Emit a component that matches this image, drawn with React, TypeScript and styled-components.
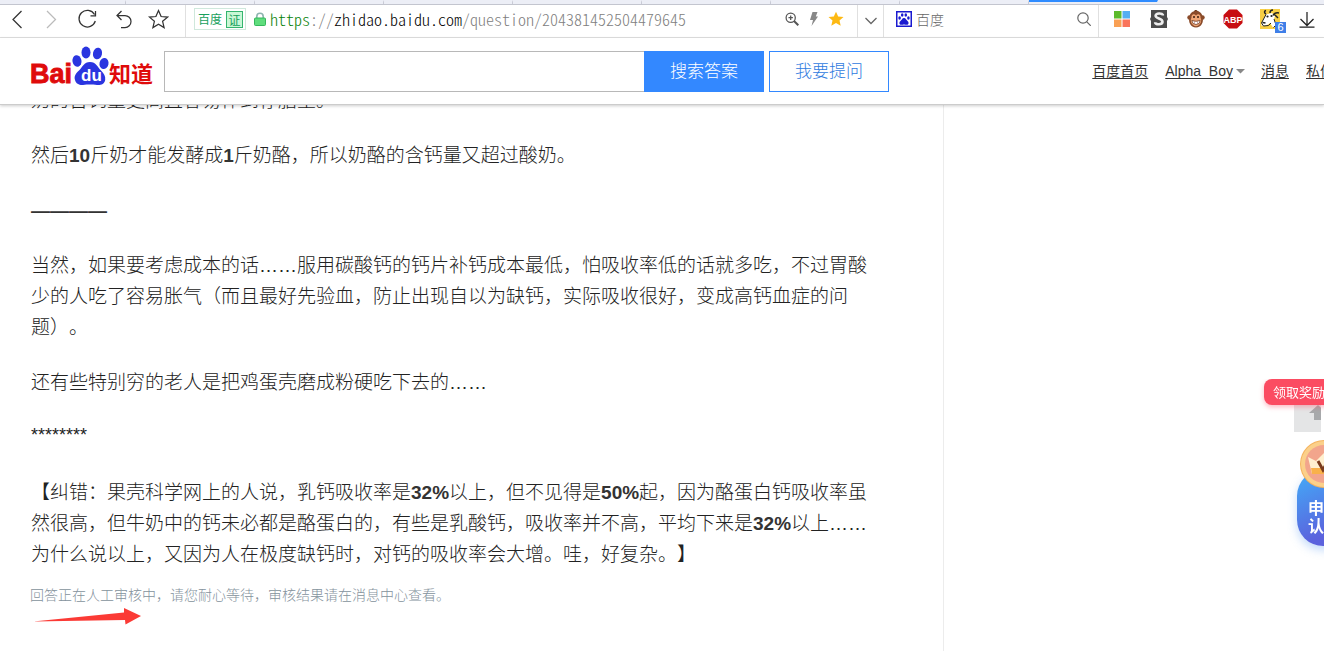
import React from "react";
import styled, { createGlobalStyle } from "styled-components";

const sans = `"Liberation Sans", "Noto Sans CJK SC", sans-serif`;
const cjk = `"Noto Sans CJK SC", sans-serif`;

const GlobalStyle = createGlobalStyle`
  * { box-sizing: border-box; }
  html, body { margin: 0; background: #fff; }
  body { font-family: ${sans}; color: #333; overflow: hidden; }
  button { font-family: inherit; padding: 0; margin: 0; border: 0; background: none; cursor: pointer; }
  svg { display: block; }
`;

const Page = styled.div`
  display: flex;
  flex-direction: column;
  height: 100vh;
  overflow: hidden;
`;

const TabStrip = styled.div`
  display: flex;
  flex: none;
  height: 5px;
  background: #eceef6;
  border-bottom: 1px solid #c3c5cf;
  overflow: hidden;
`;

const Tab = styled.div<{ $active?: boolean }>`
  flex: none;
  width: 129px;
  border-right: 1px solid ${(p) => (p.$active ? "transparent" : "#c9cbd6")};
  border-top: 2px solid ${(p) => (p.$active ? "#2f8cff" : "transparent")};

  &:first-child { margin-left: -3px; }
`;

const Toolbar = styled.div`
  display: flex;
  flex: none;
  height: 33px;
  border-bottom: 1px solid #e0e0e0;
  overflow: hidden;
`;

const ToolGroup = styled.div<{ $pad?: string; $grow?: boolean; $width?: number }>`
  display: flex;
  align-items: center;
  flex: ${(p) => (p.$grow ? "1 1 0" : "none")};
  width: ${(p) => (p.$width ? p.$width + "px" : "auto")};
  min-width: 0;
  padding: ${(p) => p.$pad ?? "0"};
  border-right: 1px solid #e0e0e0;

  &:last-child { border-right: 0; }
`;

const IconButton = styled.button<{ $width: number }>`
  position: relative;
  display: flex;
  flex: none;
  align-items: center;
  justify-content: center;
  width: ${(p) => p.$width}px;
  height: 28px;
`;

const SiteBadge = styled.span`
  display: flex;
  align-items: center;
  gap: 4px;
  flex: none;
  height: 22px;
  padding: 0 2px 0 3px;
  border: 1px solid #cfe8dc;
  font: 12px/16px ${cjk};
  color: #17a05c;
`;

const Verified = styled.span`
  width: 17px;
  line-height: 15px;
  text-align: center;
  border: 1px solid #35b56f;
  background: #c9f7d6;
`;

const LockBox = styled.span`
  flex: none;
  padding: 0 4px 0 8px;
`;

const Url = styled.span`
  flex: 1 1 0;
  min-width: 0;
  overflow: hidden;
  white-space: nowrap;
  font: 16px/24px ${cjk};
  font-weight: 300;
  font-feature-settings: "hwid";
  color: #808080;
`;

const Scheme = styled.span`
  color: #078207;
`;

const Host = styled.span`
  color: #000;
`;

const EngineLabel = styled.label`
  flex: none;
  margin-right: 4px;
`;

const QuickSearch = styled.input`
  flex: 1 1 0;
  min-width: 0;
  padding: 0;
  border: 0;
  outline: 0;
  background: transparent;
  font: 14px/20px ${cjk};
  font-weight: 300;

  &::placeholder { color: #666; opacity: 1; }
`;

const Count = styled.span`
  position: absolute;
  right: 2px;
  bottom: 0;
  width: 11px;
  height: 11px;
  background: #3f7fe8;
  color: #fff;
  font: 11px/11px ${sans};
  text-align: center;
`;

const Header = styled.header`
  position: relative;
  z-index: 1;
  display: flex;
  flex: none;
  align-items: center;
  height: 67px;
  padding-left: 30px;
  border-bottom: 1px solid #ccc;
  background: #fff;
  box-shadow: 0 1px 3px rgba(0, 0, 0, 0.2);
  white-space: nowrap;
`;

const LogoLink = styled.a`
  flex: none;
  margin: 0 11px 8px 0;
`;

const SearchForm = styled.form`
  display: flex;
  flex: none;
  height: 41px;
  margin-top: 1px;
`;

const SearchInput = styled.input`
  width: 480px;
  padding: 0 10px;
  border: 1px solid #b8b8b8;
  border-right: 0;
  border-radius: 0;
  outline: 0;
  font: 16px ${sans};
`;

const SearchButton = styled.button<{ $outline?: boolean }>`
  width: 120px;
  margin-left: ${(p) => (p.$outline ? 5 : 0)}px;
  padding-bottom: 3px;
  border: 1px solid #3388ff;
  background: ${(p) => (p.$outline ? "#fff" : "#3388ff")};
  color: ${(p) => (p.$outline ? "#2f7be0" : "#fff")};
  font: 17px/24px ${cjk};
  font-weight: 300;
`;

const UserNav = styled.nav`
  display: flex;
  align-items: center;
  gap: 17px;
  margin: 0 -10px 0 auto;
  font-size: 14px;
  line-height: 20px;
`;

const NavLink = styled.a`
  color: #333;
  text-decoration: underline;
  text-decoration-skip-ink: none;
  text-underline-offset: 2px;
`;

const UserMenu = styled.span`
  display: flex;
  align-items: center;
  gap: 3px;
  margin-right: -1px;
`;

const Content = styled.main`
  display: flex;
  flex: 1 1 0;
  min-height: 0;
  overflow: hidden;
`;

const Answer = styled.article`
  flex: none;
  width: 944px;
  padding: 0 74px 0 31px;
  border-right: 1px solid #ececec;
`;

const Scrolled = styled.div`
  margin-top: -22px;
`;

const Paragraph = styled.p`
  margin: 0 0 24px;
  font: 19px/31px ${cjk};
  font-weight: 300;
  text-spacing-trim: space-all;
  color: #222;

  b {
    font-family: "Liberation Sans", sans-serif;
    font-weight: 700;
    line-height: 1;
    color: #333;
  }
`;

const Dots = styled.span`
  font-family: "Liberation Sans", sans-serif;
  line-height: 1;
`;

const Stars = styled(Paragraph)`
  font-family: "Liberation Sans", sans-serif;
  font-size: 18px;
  font-weight: 400;
`;

const Notice = styled.p`
  margin: -10px 0 0 -1px;
  font: 14px/24px ${cjk};
  font-weight: 300;
  color: #84929c;
`;

const Floating = styled.aside`
  position: fixed;
  z-index: 2;
  top: 379px;
  right: 0;
  width: 68px;
  height: 184px;
  overflow: hidden;
`;

const Reward = styled.button`
  position: absolute;
  top: 0;
  left: 8px;
  width: 80px;
  height: 26px;
  padding-left: 9px;
  border-radius: 8px;
  background: #fb4c62;
  box-shadow: 0 2px 5px rgba(251, 76, 98, 0.4);
  color: #fff;
  font: 13px/26px ${cjk};
  text-align: left;
  white-space: nowrap;
`;

const BackTop = styled.button`
  position: absolute;
  top: 24px;
  left: 38px;
  width: 27px;
  height: 29px;
  overflow: hidden;
  background: #e4e5e6;
`;

const Certify = styled.button`
  position: absolute;
  top: 91px;
  left: 41px;
  width: 60px;
  height: 76px;
  padding: 16px 0 0 11px;
  border-radius: 26px;
  background: linear-gradient(155deg, #45a4f5 10%, #5b62dd 75%);
  box-shadow: 0 4px 10px rgba(80, 150, 240, 0.35);
  color: #fff;
  font: 700 16px/18px ${cjk};
  text-align: left;
  white-space: nowrap;
`;

const Coin = styled.span`
  position: absolute;
  top: 60px;
  left: 43px;
  pointer-events: none;
`;

const Arrow = styled.svg`
  margin: 1px 0 0 2px;
`;

const Line = ({ children, size = 22, w = 1.25, color = "#333" }: { children: React.ReactNode; size?: number; w?: number; color?: string }) => (
  <svg width={size} height={size} viewBox={`0 0 ${size} ${size}`} fill="none" stroke={color} strokeWidth={w}>
    {children}
  </svg>
);

const Logo = () => (
  <svg width="123" height="42" viewBox="0 0 123 42">
    <text x="0" y="37" fontFamily="Liberation Sans, sans-serif" fontWeight="700" fontSize="27" fill="#df0b0b" stroke="#df0b0b" strokeWidth=".9">Bai</text>
    <g fill="#2a35e0">
      <ellipse cx="47" cy="15" rx="4.500" ry="5.800" transform="rotate(-12 47 15)" />
      <ellipse cx="56" cy="6.500" rx="4.500" ry="5.900" />
      <ellipse cx="67.500" cy="7.500" rx="4.500" ry="5.900" transform="rotate(12 67.5 7.5)" />
      <ellipse cx="74" cy="17.500" rx="4.500" ry="5.500" transform="rotate(12 74 17.5)" />
      <path d="M60 16c-6 0-7.500 5-11 8.500-4 3.500-5 6.500-4 9.500 1 4 4.500 5.200 8 4.900 5-.5 9-.5 14 0 4 .3 7.500-1 8.200-5 .5-3.500-1.200-6.500-4.200-9.400C67.500 21 66 16 60 16z" />
    </g>
    <text x="51" y="35" fontFamily="Liberation Sans, sans-serif" fontWeight="700" fontSize="17" fill="#fff">du</text>
    <text x="79" y="36" fontFamily="Noto Sans CJK SC, sans-serif" fontWeight="700" fontSize="22" fill="#df0b0b">知道</text>
  </svg>
);

const PawBadge = () => (
  <svg width="16" height="16" viewBox="0 0 16 16">
    <rect x=".75" y=".75" width="14.5" height="14.5" fill="#fff" stroke="#1a1ad0" strokeWidth="1.500" />
    <g fill="#1a1ad0">
      <ellipse cx="3.600" cy="7" rx="1.300" ry="1.700" />
      <ellipse cx="6.200" cy="4" rx="1.300" ry="1.700" />
      <ellipse cx="9.800" cy="4" rx="1.300" ry="1.700" />
      <ellipse cx="12.400" cy="7" rx="1.300" ry="1.700" />
      <path d="M8 7c-2 0-2 2-3.500 3S3 13.800 5 13.800s2-.4 3-.4 1 .4 3 .4 2-2.800.5-3.800S10 7 8 7z" />
    </g>
  </svg>
);

const Monkey = () => (
  <svg width="18" height="20" viewBox="0 0 18 20">
    <path d="M7 3c0-2 2-2.500 3-1.500L12 3z" fill="#6d3a1e" />
    <circle cx="2.500" cy="8.500" r="2.200" fill="#8a4b2a" />
    <circle cx="15.500" cy="8.500" r="2.200" fill="#8a4b2a" />
    <path d="M9 2c4.500 0 6.500 3 6.500 6.500 1.500 4-1 10-6.500 10s-8-6-6.500-10C2.500 5 4.500 2 9 2z" fill="#8a4b2a" />
    <path d="M9 6.500C7 4 4 5.500 4.500 8.500c-2 3.500.5 8.700 4.500 8.700s6.500-5.200 4.500-8.700C14 5.500 11 4 9 6.500z" fill="#f0a575" />
    <circle cx="7" cy="8" r="1" fill="#3a1d0e" />
    <circle cx="11" cy="8" r="1" fill="#3a1d0e" />
    <path d="M4.800 11.500q4.200 1.600 8.400 0-.3 4-4.200 4t-4.200-4z" fill="#fff" stroke="#6d3a1e" strokeWidth=".8" />
    <path d="M7.500 12.200v3M10.500 12.200v3" stroke="#a66" strokeWidth=".5" />
  </svg>
);

const Goat = () => (
  <svg width="20" height="20" viewBox="0 0 20 20">
    <rect width="20" height="20" fill="#f8cf45" />
    <path d="M6 5.500l6-1.500 3 3-1 3 2 6-3 2.500-3-4.500-3.500 2.500-5 .5L1.500 14z" fill="#fff" />
    <path d="M6 5.500L1.500 14l2 3 5-.5 2.500-2.500M14 10l2 6-2.500 2.500" fill="none" stroke="#222" strokeWidth="1" />
    <path d="M6 5C4 4 4 2 6 1.500M10 4c0-2 1-3 3-3M13 6.500c1.500-3 3.500-3 6-2.500M14 5l4 4" fill="none" stroke="#222" strokeWidth="1.500" />
    <circle cx="7.500" cy="7.500" r="1.100" fill="#222" />
    <circle cx="11.500" cy="7" r="1.100" fill="#222" />
    <path d="M2.500 13.500l3 .5" stroke="#222" strokeWidth="1.400" />
  </svg>
);

const tabs = [false, false, false, false, false, false, false, false, true];

export default function App() {
  return (
    <Page>
      <GlobalStyle />
      <TabStrip>
        {tabs.map((active, i) => (
          <Tab key={i} $active={active} />
        ))}
      </TabStrip>

      <Toolbar>
        <ToolGroup $width={186} $pad="0 0 4px">
          <IconButton $width={35} aria-label="后退">
            <Line><path d="M14.500 3L6 11.500 14.500 20" /></Line>
          </IconButton>
          <IconButton $width={35} aria-label="前进">
            <Line color="#bbb"><path d="M5 3l8.500 8.500L5 20" /></Line>
          </IconButton>
          <IconButton $width={35} aria-label="刷新">
            <Line><path d="M17.500 6.500A8.300 8.300 0 1 0 18.300 13M18.500 3v4.800h-5" /></Line>
          </IconButton>
          <IconButton $width={35} aria-label="恢复">
            <Line><path d="M9.500 3L5 7.500 9.500 12M5.500 7.500h7.500a6 6 0 0 1 0 12H9" /></Line>
          </IconButton>
          <IconButton $width={35} aria-label="收藏">
            <Line><path d="M11.500 2.500l2.600 6 6.400.6-4.900 4.200 1.500 6.300-5.600-3.400-5.600 3.400 1.500-6.300L2.500 9.100l6.400-.6z" /></Line>
          </IconButton>
        </ToolGroup>

        <ToolGroup $grow $pad="0 10px 4px 8px">
          <SiteBadge>
            百度
            <Verified>证</Verified>
          </SiteBadge>
          <LockBox>
            <svg width="12" height="14" viewBox="0 0 12 14">
              <path d="M2.800 7V4.500a3.200 3.200 0 0 1 6.400 0V7" fill="none" stroke="#8fb5b0" strokeWidth="1.600" />
              <rect x=".5" y="6" width="11" height="7.500" rx="1" fill="#5fdd7d" stroke="#35b85c" />
            </svg>
          </LockBox>
          <Url>
            <Scheme>https</Scheme>://<Host>zhidao.baidu.com</Host>/question/204381452504479645
          </Url>
          <IconButton $width={22} aria-label="缩放">
            <Line size={14} color="#555">
              <circle cx="5.700" cy="5.700" r="4.600" />
              <path d="M9 9l4.300 4.300" strokeWidth="2" />
              <path d="M3.500 5.700h4.400M5.700 3.500v4.400" />
            </Line>
          </IconButton>
          <IconButton $width={22} aria-label="极速模式">
            <svg width="10" height="14" viewBox="0 0 10 14">
              <path d="M3.500 0h5L6.800 4.500H9L2.500 14 4 8H1z" fill="#888" />
            </svg>
          </IconButton>
          <IconButton $width={22} aria-label="已收藏">
            <svg width="16" height="16" viewBox="0 0 16 16">
              <path d="M8 .8l2.200 4.800 5.300.5-4 3.500 1.200 5.200L8 12l-4.700 2.800 1.200-5.200-4-3.500 5.300-.5z" fill="#fdb913" />
            </svg>
          </IconButton>
        </ToolGroup>

        <ToolGroup>
          <IconButton $width={25} aria-label="展开">
            <Line size={12} color="#666"><path d="M.5 3l5.500 5.500L11.500 3" /></Line>
          </IconButton>
        </ToolGroup>

        <ToolGroup $width={215} $pad="0 3px 4px 12px">
          <EngineLabel htmlFor="quick" aria-label="百度">
            <PawBadge />
          </EngineLabel>
          <QuickSearch id="quick" placeholder="百度" />
          <IconButton $width={22} aria-label="搜索">
            <Line size={14} color="#666" w={1.2}>
              <circle cx="6" cy="6" r="5.200" />
              <path d="M9.800 9.800l4 4" />
            </Line>
          </IconButton>
        </ToolGroup>

        <ToolGroup $width={225} $pad="0 0 4px 4px">
          <IconButton $width={37} aria-label="应用">
            <svg width="16" height="16" viewBox="0 0 16 16">
              <path d="M0 0h7.500v7.500H0z" fill="#5cba2b" />
              <path d="M8.500 0H16v7.500H8.500z" fill="#55aef2" />
              <path d="M0 8.500h7.500V16H0z" fill="#f9a054" />
              <path d="M8.500 8.500H16V16H8.500z" fill="#f9735a" />
            </svg>
          </IconButton>
          <IconButton $width={37} aria-label="样式">
            <svg width="18" height="18" viewBox="0 0 18 18">
              <path d="M1 0h16v7l1 2-1 2v7H1v-7L0 9l1-2z" fill="#4c4c4c" />
              <path d="M12.800 5.500V4.800C12 3 6 2.800 5.600 5.600 5.400 9 12.800 8 12.500 12c-.5 3-6.500 2.800-7.300.8v-.6" fill="none" stroke="#eee" strokeWidth="2.600" />
            </svg>
          </IconButton>
          <IconButton $width={37} aria-label="脚本">
            <Monkey />
          </IconButton>
          <IconButton $width={37} aria-label="广告拦截">
            <svg width="20" height="20" viewBox="0 0 20 20">
              <path d="M6 .5h8L19.500 6v8L14 19.500H6L.5 14V6z" fill="#c70d12" />
              <text x="10" y="13.500" textAnchor="middle" fontFamily="Liberation Sans, sans-serif" fontWeight="700" fontSize="9" fill="#fff">ABP</text>
            </svg>
          </IconButton>
          <IconButton $width={37} aria-label="扩展">
            <Goat />
            <Count>6</Count>
          </IconButton>
          <IconButton $width={37} aria-label="下载">
            <Line size={18} color="#222"><path d="M9 2v13M2.500 9L9 15.500 15.500 9M1.500 17h15" /></Line>
          </IconButton>
        </ToolGroup>
      </Toolbar>

      <Header>
        <LogoLink href="#" aria-label="百度知道">
          <Logo />
        </LogoLink>
        <SearchForm onSubmit={(e) => e.preventDefault()}>
          <SearchInput aria-label="搜索" />
          <SearchButton type="submit">搜索答案</SearchButton>
          <SearchButton type="button" $outline>我要提问</SearchButton>
        </SearchForm>
        <UserNav>
          <NavLink href="#">百度首页</NavLink>
          <UserMenu>
            <NavLink href="#">Alpha_Boy</NavLink>
            <svg width="9" height="5" viewBox="0 0 9 5"><path d="M0 0h9L4.500 4.500z" fill="#888" /></svg>
          </UserMenu>
          <NavLink href="#">消息</NavLink>
          <NavLink href="#">私信</NavLink>
        </UserNav>
      </Header>

      <Content>
        <Answer>
          <Scrolled>
            <Paragraph>奶的含钙量更高且容易伴到存脂里。</Paragraph>
            <Paragraph>然后<b>10</b>斤奶才能发酵成<b>1</b>斤奶酪，所以奶酪的含钙量又超过酸奶。</Paragraph>
            <Paragraph><b>————</b></Paragraph>
            <Paragraph>当然，如果要考虑成本的话<Dots>……</Dots>服用碳酸钙的钙片补钙成本最低，怕吸收率低的话就多吃，不过胃酸少的人吃了容易胀气（而且最好先验血，防止出现自以为缺钙，实际吸收很好，变成高钙血症的问题）。</Paragraph>
            <Paragraph>还有些特别穷的老人是把鸡蛋壳磨成粉硬吃下去的<Dots>……</Dots></Paragraph>
            <Stars>********</Stars>
            <Paragraph>【纠错：果壳科学网上的人说，乳钙吸收率是<b>32%</b>以上，但不见得是<b>50%</b>起，因为酪蛋白钙吸收率虽然很高，但牛奶中的钙未必都是酪蛋白的，有些是乳酸钙，吸收率并不高，平均下来是<b>32%</b>以上<Dots>……</Dots>为什么说以上，又因为人在极度缺钙时，对钙的吸收率会大增。哇，好复杂。】</Paragraph>
            <Notice>回答正在人工审核中，请您耐心等待，审核结果请在消息中心查看。</Notice>
            <Arrow width="108" height="18" viewBox="0 0 108 18">
              <path d="M0 14.500L91 5.500V1l17 8-15.500 8.500L92 13z" fill="#fb3a35" />
            </Arrow>
          </Scrolled>
        </Answer>
      </Content>

      <Floating>
        <BackTop aria-label="返回顶部">
          <svg width="27" height="29" viewBox="0 0 27 29">
            <path d="M15 10l9-8 9 8h-5v7h-8v-7z" fill="#a7a9ab" />
          </svg>
        </BackTop>
        <Reward>领取奖励</Reward>
        <Certify>申请<br />认证</Certify>
        <Coin>
          <svg width="50" height="50" viewBox="0 0 50 50">
            <circle cx="25" cy="25" r="24" fill="#f5b45f" />
            <circle cx="25" cy="25" r="23" fill="#fbd08a" />
            <circle cx="25" cy="25" r="19" fill="#f2a58c" />
            <path d="M9 18l8 4 8-8 8 8 8-4-3 17H13z" fill="#fff0cf" />
            <path d="M13 35l-1-6 26 0-1 6z" fill="#f9b14a" />
            <path d="M19 22l5 9 5-9" fill="none" stroke="#7a3b1d" strokeWidth="3" />
          </svg>
        </Coin>
      </Floating>
    </Page>
  );
}
